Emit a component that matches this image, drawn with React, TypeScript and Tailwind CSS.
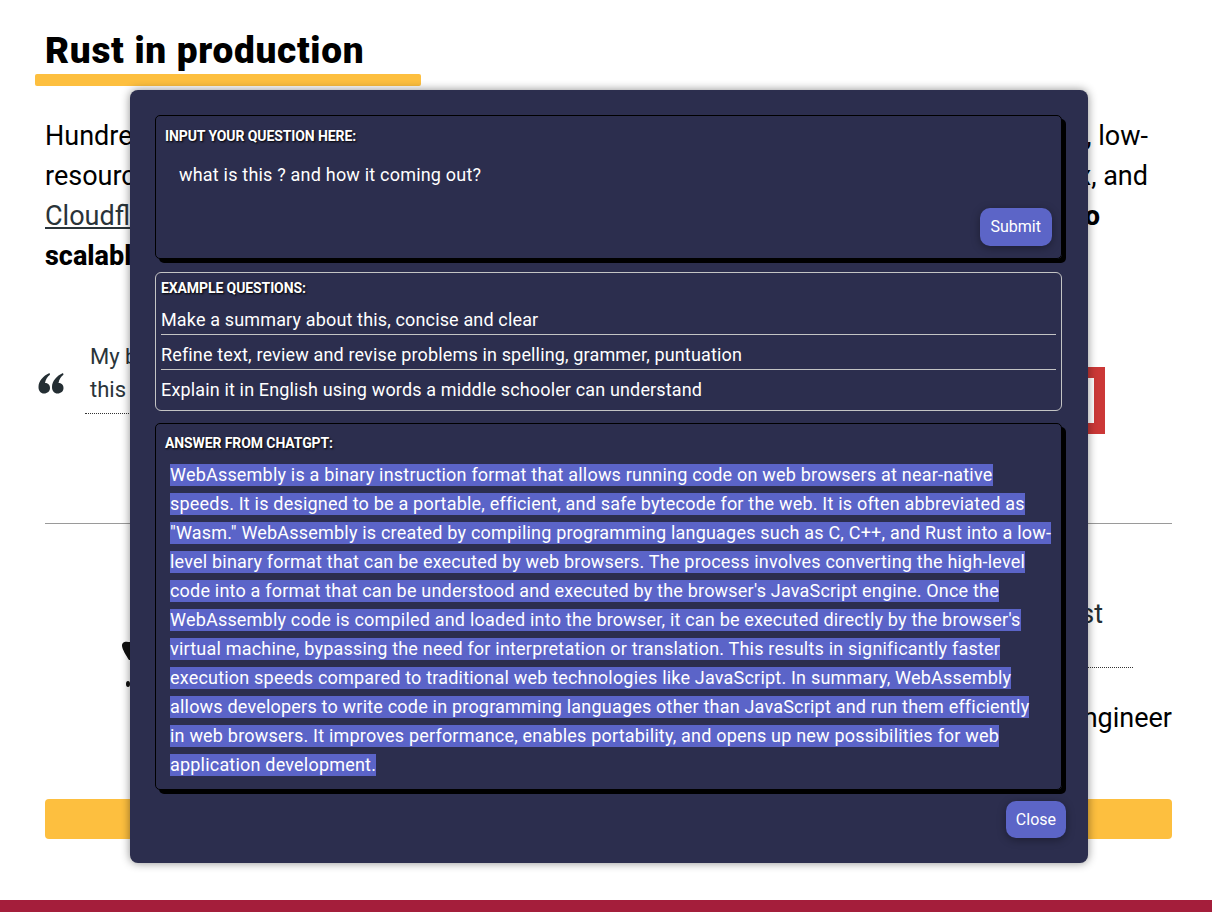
import React from "react";

const answerLines = [
  "WebAssembly is a binary instruction format that allows running code on web browsers at near-native",
  "speeds. It is designed to be a portable, efficient, and safe bytecode for the web. It is often abbreviated as",
  "\"Wasm.\" WebAssembly is created by compiling programming languages such as C, C++, and Rust into a low-",
  "level binary format that can be executed by web browsers. The process involves converting the high-level",
  "code into a format that can be understood and executed by the browser's JavaScript engine. Once the",
  "WebAssembly code is compiled and loaded into the browser, it can be executed directly by the browser's",
  "virtual machine, bypassing the need for interpretation or translation. This results in significantly faster",
  "execution speeds compared to traditional web technologies like JavaScript. In summary, WebAssembly",
  "allows developers to write code in programming languages other than JavaScript and run them efficiently",
  "in web browsers. It improves performance, enables portability, and opens up new possibilities for web",
  "application development.",
];

const examples = [
  "Make a summary about this, concise and clear",
  "Refine text, review and revise problems in spelling, grammer, puntuation",
  "Explain it in English using words a middle schooler can understand",
];

const quotePath =
  "M11.5 1 C5 4 0.5 9 0.5 15 C0.5 19 2.8 21.5 6 21.5 C9.5 21.5 12 19.2 12 16 C12 12.8 9.8 11 7 11 C7.5 7.5 9.5 4.5 12 2.8 Z";

function QuoteMark() {
  return (
    <svg viewBox="0 0 26 22" className="mt-[32px] -ml-[7px] h-[22px] w-[26px] shrink-0" fill="#242e33">
      <path d={quotePath} />
      <path transform="translate(13.5 0)" d={quotePath} />
    </svg>
  );
}

function NpmLogo() {
  return (
    <svg viewBox="0 0 170 67" className="ml-[40px] mr-[67px] mt-[27px] h-[67px] w-[170px] shrink-0">
      <rect x="0" y="0" width="170" height="67" fill="#cb3837" />
      <rect x="11" y="11" width="148" height="45" fill="#ffffff" />
      <rect x="22" y="11" width="12" height="34" fill="#cb3837" />
      <rect x="60" y="11" width="12" height="45" fill="#cb3837" />
      <rect x="105" y="11" width="12" height="34" fill="#cb3837" />
      <rect x="135" y="11" width="12" height="34" fill="#cb3837" />
    </svg>
  );
}

function LeftLogo() {
  return (
    <svg viewBox="0 0 60 70" className="ml-[55px] mt-[36px] h-[70px] w-[60px] shrink-0">
      <path d="M22 16 C22 12 25 11.5 28 12 L40 12 L40 30 L29 30 C26 25 22.5 20 22 16 Z" fill="#111" />
      <ellipse cx="28" cy="54" rx="2" ry="3" fill="#111" />
    </svg>
  );
}

const labelCls =
  "text-[14px] font-bold uppercase leading-[20px] tracking-[-0.1px] [text-shadow:1px_1px_2px_#000]";

export default function App() {
  return (
    <div className="relative h-[912px] w-[1212px] overflow-hidden bg-white font-['Roboto',sans-serif] text-black">
      {/* background page */}
      <div className="pl-[45px] pr-[40px] pt-[33px]">
        <h2 className="text-[37px] font-black leading-[36px] tracking-[0.7px]">Rust in production</h2>
        <div className="-ml-[10px] mt-[5px] h-[12px] w-[386px] rounded-[2px] bg-[#fdbf3f]" />

        <div className="mt-[30px] text-[27px] leading-[40px]">
          <div className="flex w-[1103px] justify-between whitespace-nowrap">
            <span>Hundreds of companies around the</span>
            <span>in production today for fast, low-</span>
          </div>
          <div className="flex w-[1103px] justify-between whitespace-nowrap">
            <span>resource, cross-platform solutions.</span>
            <span>like Firefox, Dropbox, and</span>
          </div>
          <div className="flex w-[1055px] justify-between whitespace-nowrap">
            <span>
              <a className="text-[#2a3439] underline">Cloudflare</a>, uses Rust.
            </span>
            <b className="font-extrabold">from embedded devices to</b>
          </div>
          <div className="whitespace-nowrap">
            <b className="font-extrabold">scalable web services, Rust is a great fit.</b>
          </div>
        </div>

        {/* testimonial 1 */}
        <div className="mt-[64px] flex items-start">
          <QuoteMark />
          <div className="ml-[21px] flex-1">
            <p className="border-b border-dotted border-[#333] pb-[7px] pl-[5px] text-[22px] leading-[33px] text-[#2a3439]">
              My biggest compliment to Rust
              <br />
              this is amazing.
            </p>
          </div>
          <NpmLogo />
        </div>

        <div className="mt-[89px] h-px bg-[#9a9a9a]" />

        {/* testimonial 2 */}
        <div className="mt-[70px] flex items-start">
          <LeftLogo />
          <div className="flex-1">
            <p className="mr-[39px] border-b border-dotted border-[#333] pb-[33px] pr-[30px] text-right text-[27px] leading-[40px] text-[#242e33]">
              Rust has helped us build services that are fast
            </p>
            <p className="mt-[30px] text-right text-[27px] leading-[40px]">— Antonio Verardi, Infrastructure Engineer</p>
          </div>
        </div>

        <div className="mt-[61px] h-[40px] rounded-[4px] bg-[#fdbf3f]" />
        <div className="-ml-[45px] -mr-[40px] mt-[61px] h-[20px] bg-[#a41e3b]" />
      </div>

      {/* modal */}
      <div className="absolute left-[130px] top-[90px] w-[958px] rounded-[8px] bg-[#2c2e4e] pb-[25px] pl-[25px] pr-[26px] pt-[25px] text-white shadow-[0_0_10px_rgba(0,0,0,0.45)]">
        {/* input */}
        <div className="flex h-[144px] flex-col rounded-[5px] border border-black px-[9px] pt-[10px] shadow-[4px_4px_0_#000]">
          <div className={labelCls}>Input your question here:</div>
          <div className="mt-[18px] pl-[14px] text-[18px] leading-[22px] tracking-[0.2px]">
            what is this ? and how it coming out?
          </div>
          <div className="mt-[22px] flex justify-end">
            <button className="h-[38px] rounded-[10px] bg-[#5c65c7] px-[11px] text-[16px] leading-[38px] text-white shadow-[0_2px_8px_rgba(0,0,0,0.35)]">
              Submit
            </button>
          </div>
        </div>

        {/* examples */}
        <div className="mt-[13px] rounded-[6px] border border-[#c4c4c4] px-[5px] pb-[9px] pt-[5px]">
          <div className={"mb-[2px] " + labelCls}>Example questions:</div>
          {examples.map((e, i) => (
            <div
              key={i}
              className={
                i < examples.length - 1
                  ? "border-b border-[#c4c4c4] pb-[3px] pt-[9px] text-[18px] leading-[22px] tracking-[0.15px]"
                  : "pt-[9px] text-[18px] leading-[22px] tracking-[0.15px]"
              }
            >
              {e}
            </div>
          ))}
        </div>

        {/* answer */}
        <div className="mt-[12px] rounded-[5px] border border-black px-[9px] pb-[10px] pt-[9px] shadow-[4px_4px_0_#000]">
          <div className={labelCls}>Answer from ChatGPT:</div>
          <div className="mt-[7px] pl-[5px] text-[18px] tracking-[0.2px]">
            {answerLines.map((l, i) => (
              <div key={i} className="flex h-[29px] items-center">
                <span className="inline-block h-[22px] whitespace-nowrap bg-[#5b64c8] leading-[22px]">{l}</span>
              </div>
            ))}
          </div>
        </div>

        <div className="-mr-[4px] mt-[11px] flex justify-end">
          <button className="h-[37px] rounded-[10px] bg-[#5c65c7] px-[10px] text-[16px] leading-[37px] text-white shadow-[0_2px_8px_rgba(0,0,0,0.35)]">
            Close
          </button>
        </div>
      </div>
    </div>
  );
}
